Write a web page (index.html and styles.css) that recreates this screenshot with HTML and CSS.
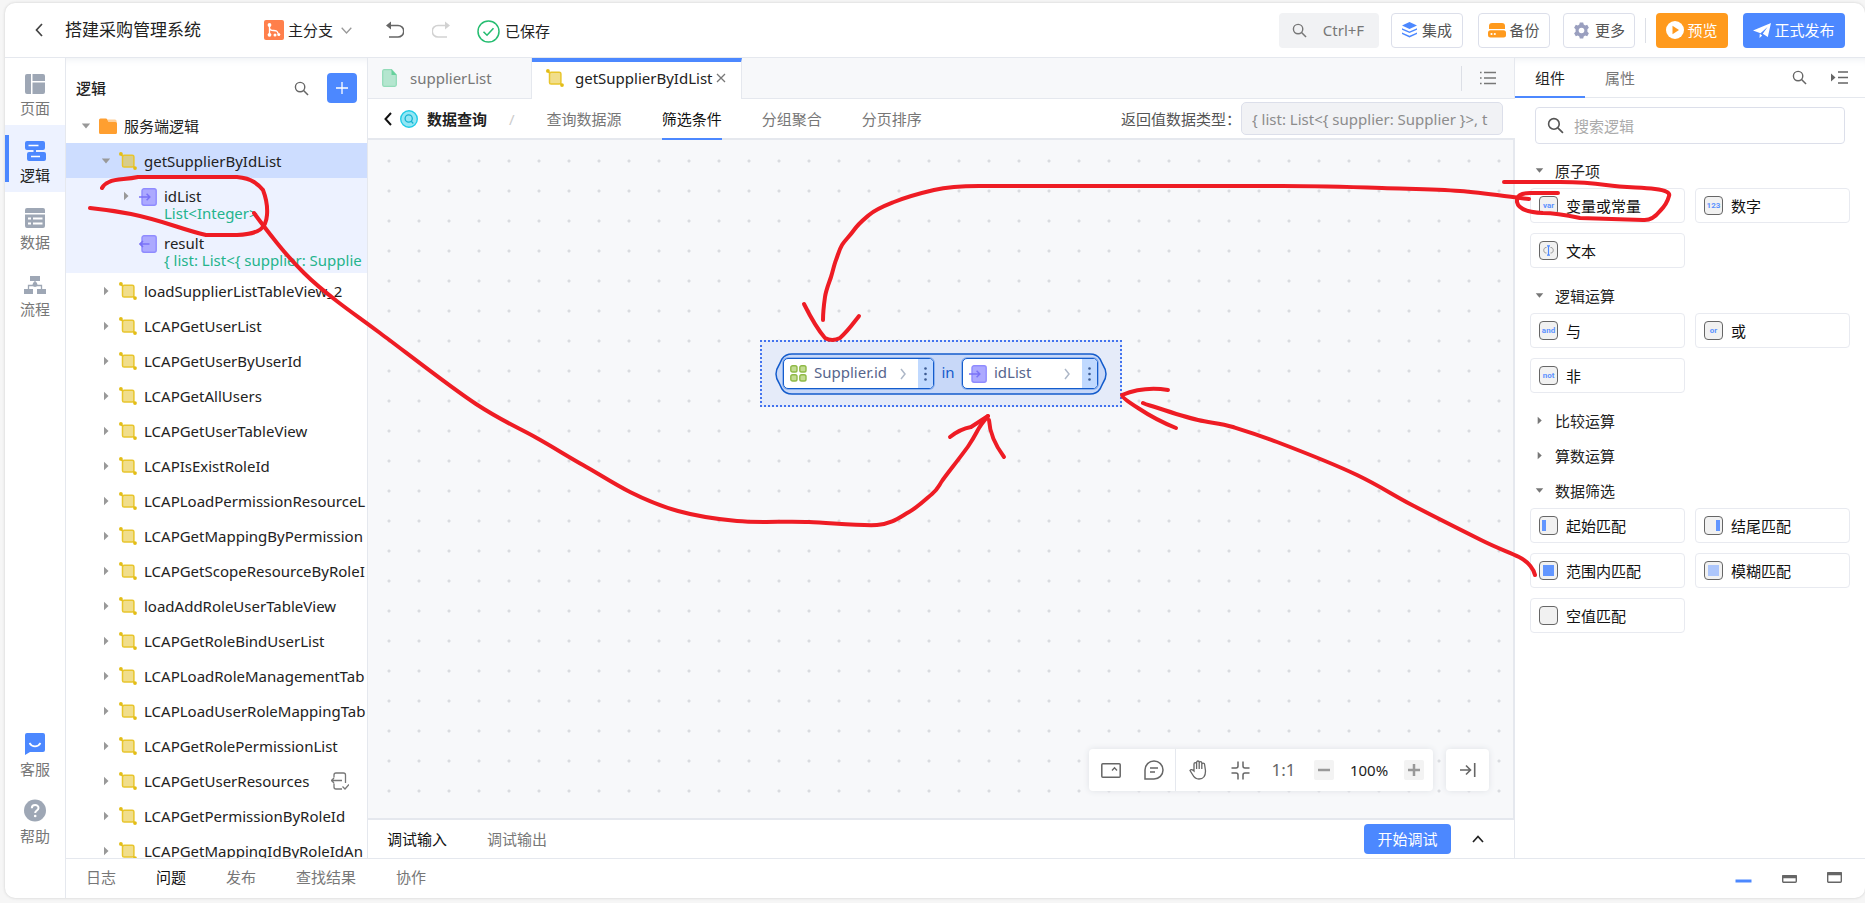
FILE: index.html
```html
<!DOCTYPE html>
<html lang="zh-CN">
<head>
<meta charset="utf-8">
<title>搭建采购管理系统</title>
<link rel="stylesheet" href="styles.css">
</head>
<body>
<svg class="defs" aria-hidden="true">
  <symbol id="i-search" viewBox="0 0 16 16"><circle cx="6.5" cy="6.5" r="5" fill="none" stroke="currentColor" stroke-width="1.5"/><path d="M10.2 10.2 15 15" fill="none" stroke="currentColor" stroke-width="1.6"/></symbol>
  <symbol id="i-right" viewBox="0 0 10 10"><path d="M3 .8 7.5 5 3 9.2z" fill="currentColor"/></symbol>
  <symbol id="i-down" viewBox="0 0 10 10"><path d="M.8 2.6h8.4L5 7.4z" fill="currentColor"/></symbol>
  <symbol id="i-logic" viewBox="0 0 18 18"><path d="M1.5 1.8 4 4.5M14 14l2 2" stroke="#e3bd17" stroke-width="1.6"/><rect x="3.5" y="3.2" width="11.4" height="11.8" rx="1.6" fill="#e3bd17" fill-opacity=".5" stroke="#e8c52c" stroke-width="1.5"/><circle cx="1.9" cy="1.9" r="1.9" fill="#e3bd17"/><circle cx="16" cy="16.1" r="1.9" fill="#e3bd17"/></symbol>
  <symbol id="i-in" viewBox="0 0 18 18"><rect x="3" y=".8" width="14.2" height="16.4" rx="2" fill="#aca9ff" stroke="#8f8bff" stroke-width="1.4"/><path d="M0 9h10M7.6 5.8 10.8 9l-3.2 3.2" fill="none" stroke="#7a72f7" stroke-width="1.5"/></symbol>
  <symbol id="i-out" viewBox="0 0 18 18"><rect x="3" y=".8" width="14.2" height="16.4" rx="2" fill="#aca9ff" stroke="#8f8bff" stroke-width="1.4"/><path d="M10.5 9H1M4 6 1 9l3 3" fill="none" stroke="#7a72f7" stroke-width="1.6"/></symbol>
</svg>
<div class="app">
  <header class="top">
    <button class="plain back" aria-label="返回"><svg width="8" height="14" viewBox="0 0 8 14"><path d="M7 1 1.5 7 7 13" fill="none" stroke="#444" stroke-width="1.7"/></svg></button>
    <h1 class="title">搭建采购管理系统</h1>
    <button class="plain branch"><svg width="20" height="20" viewBox="0 0 20 20"><rect width="20" height="20" rx="2" fill="#ff7f4b"/><g fill="none" stroke="#fff" stroke-width="1.3"><path d="M5.5 5v9M5.5 7.500c0 2.500 1.500 3 4 3 3.500 0 4 1 4.600 3"/></g><g fill="#fff"><circle cx="5.500" cy="5" r="1.900"/><circle cx="5.500" cy="14.800" r="1.900"/><circle cx="11" cy="15" r="1.500"/><circle cx="14.800" cy="14.500" r="1.500"/></g></svg>主分支<svg width="11" height="7" viewBox="0 0 11 7"><path d="M.7.8 5.500 6 10.300.8" fill="none" stroke="#999" stroke-width="1.300"/></svg></button>
    <button class="plain undo" aria-label="撤销"><svg width="18" height="18" viewBox="0 0 18 18"><path d="M2.500 4.500h9.500a5 5 0 0 1 0 11.500H3" fill="none" stroke="#666" stroke-width="1.600"/><path d="M0 4.500 5 .5v8z" fill="#666"/></svg></button>
    <button class="plain redo" aria-label="重做" disabled><svg width="18" height="18" viewBox="0 0 18 18"><path d="M15.500 4.500H6a5 5 0 0 0 0 11.500h9" fill="none" stroke="#d2d2d2" stroke-width="1.600"/><path d="M18 4.500 13 .5v8z" fill="#d2d2d2"/></svg></button>
    <span class="saved"><svg width="23" height="23" viewBox="0 0 23 23"><circle cx="11.500" cy="11.500" r="10.500" fill="none" stroke="#26bd71" stroke-width="1.500"/><path d="M6.500 11.800 10 15.200l6.500-7" fill="none" stroke="#26bd71" stroke-width="1.600"/></svg>已保存</span>
    <div class="actions">
      <button class="btn find"><svg width="15" height="15"><use href="#i-search"/></svg>Ctrl+F</button>
      <button class="btn line w1"><svg width="15" height="16" viewBox="0 0 15 16"><g fill="#4c88ff"><path d="M7.500 0 15 3.600 7.500 7 0 3.600z"/><path d="M0 6.300 7.500 9.500 15 6.300v1.500L7.500 11 0 7.800z"/><path d="M0 10.500l7.500 3.200 7.500-3.200V12l-7.500 3.600L0 12z"/></g></svg>集成</button>
      <button class="btn line w1 second"><svg width="18" height="15" viewBox="0 0 18 15"><path d="M4 0h10a3 3 0 0 1 3 3v3H1V3a3 3 0 0 1 3-3z" fill="#ff9a1d"/><rect y="7.300" width="18" height="7.200" rx="2.500" fill="#ff9a1d"/><circle cx="3.500" cy="11" r="1.100" fill="#fff"/><circle cx="6.800" cy="11" r="1.100" fill="#fff"/></svg>备份</button>
      <button class="btn line w1 third"><svg width="17" height="17" viewBox="0 0 17 17"><path d="M6.800.5h3.400l.5 2 1.500.9 2-.6 1.700 3-1.500 1.500v2.400l1.500 1.500-1.700 3-2-.6-1.500.9-.5 2H6.800l-.5-2-1.500-.9-2 .6-1.700-3 1.500-1.500V7.300L1.100 5.800l1.700-3 2 .6 1.500-.9z" fill="#9a9fbf"/><circle cx="8.500" cy="8.500" r="2.800" fill="#fff"/></svg>更多</button>
      <span class="vline"></span>
      <button class="btn orange"><svg width="18" height="18" viewBox="0 0 18 18"><circle cx="9" cy="9" r="9" fill="#fff"/><path d="M6.500 4.800 13 9l-6.500 4.200z" fill="#ff9a1d"/></svg>预览</button>
      <button class="btn blue"><svg width="18" height="15" viewBox="0 0 18 15"><path d="M0 7.500 18 0l-3.200 14-5-3.200L14.500 4l-7 6.200z" fill="#fff"/><path d="M6.800 10.800 9.200 12.500 6.500 15z" fill="#fff"/></svg>正式发布</button>
    </div>
  </header>

  <nav class="rail">
    <button class="rail-item"><svg width="20" height="20" viewBox="0 0 20 20" fill="#9ea7b5"><path d="M2 0h4v20H2a2 2 0 0 1-2-2V2a2 2 0 0 1 2-2zM7.500 0H18a2 2 0 0 1 2 2v5H7.500zM7.500 8.500H20V18a2 2 0 0 1-2 2H7.500z"/></svg>页面</button>
    <button class="rail-item on"><svg width="21" height="20" viewBox="0 0 21 20"><path d="M2 0h16a2 2 0 0 1 2 2v5a2 2 0 0 1-2 2h-7v2h8a2 2 0 0 1 2 2v5a2 2 0 0 1-2 2H4a2 2 0 0 1-2-2v-5a2 2 0 0 1 2-2h4.500V9H2a2 2 0 0 1-2-2V2a2 2 0 0 1 2-2z" fill="#4c88ff"/><path d="M3.500 4.500h10M6 15.500h9" stroke="#fff" stroke-width="1.600"/></svg>逻辑</button>
    <button class="rail-item"><svg width="20" height="20" viewBox="0 0 20 20"><path d="M2 0h16a2 2 0 0 1 2 2v3H0V2a2 2 0 0 1 2-2zM0 6.500h20V18a2 2 0 0 1-2 2H2a2 2 0 0 1-2-2z" fill="#9ea7b5"/><path d="M3 10.500h3M8 10.500h9.500M3 15.500h3M8 15.500h9.500" stroke="#fff" stroke-width="2"/></svg>数据</button>
    <button class="rail-item"><svg width="22" height="20" viewBox="0 0 22 20"><path d="M6 1h10v5H6zM0 14h9v5H0zM13 14h9v5h-9z" fill="#9ea7b5"/><circle cx="11" cy="9.500" r="2.400" fill="#9ea7b5"/><path d="M11 6v4M4.500 14v-3.500h13V14" fill="none" stroke="#9ea7b5" stroke-width="1.300"/></svg>流程</button>
    <span class="grow"></span>
    <button class="rail-item"><svg width="20" height="22" viewBox="0 0 20 22"><path d="M2 0h16a2 2 0 0 1 2 2v15a2 2 0 0 1-2 2H5l-5 3V2a2 2 0 0 1 2-2z" fill="#4c88ff"/><path d="M4.500 10c2.500 4.500 8.500 4.500 11 0" fill="none" stroke="#fff" stroke-width="1.600"/></svg>客服</button>
    <button class="rail-item"><svg width="22" height="23" viewBox="0 0 22 23"><circle cx="11" cy="11.500" r="11" fill="#9ea7b5"/><path d="M7.800 9.300c0-4.400 6.700-4.200 6.700-.4 0 2.600-3.300 2.500-3.300 5" fill="none" stroke="#fff" stroke-width="2"/><circle cx="11.200" cy="17" r="1.300" fill="#fff"/></svg>帮助</button>
  </nav>

  <aside class="tree">
    <div class="tree-head"><h2>逻辑</h2><button class="plain" aria-label="搜索"><svg width="15" height="15"><use href="#i-search"/></svg></button><button class="add" aria-label="新增"><svg width="14" height="14" viewBox="0 0 14 14"><path d="M7 1v12M1 7h12" stroke="#fff" stroke-width="1.300"/></svg></button></div>
    <ul>
      <li class="row root"><svg class="tw"><use href="#i-down"/></svg><svg class="ic" viewBox="0 0 18 18"><path d="M8 2.500h8a1.600 1.600 0 0 1 1.600 1.600v4H8z" fill="#ffd09a"/><path d="M1.500 1.500H7a1 1 0 0 1 1 .7L9.300 5h7.200A1.500 1.500 0 0 1 18 6.500v9a1.500 1.500 0 0 1-1.500 1.500h-15A1.500 1.500 0 0 1 0 15.500V3a1.500 1.500 0 0 1 1.500-1.500z" fill="#ff9f30"/></svg>服务端逻辑</li>
      <li class="row sel"><svg class="tw"><use href="#i-down"/></svg><svg class="ic"><use href="#i-logic"/></svg>getSupplierByIdList</li>
      <li class="row kid"><svg class="tw"><use href="#i-right"/></svg><svg class="ic"><use href="#i-in"/></svg><span>idList<em>List&lt;Integer&gt;</em></span></li>
      <li class="row kid last"><span class="tw"></span><svg class="ic"><use href="#i-out"/></svg><span>result<em>{ list: List&lt;{ supplier: Supplie</em></span></li>
      <li class="row"><svg class="tw"><use href="#i-right"/></svg><svg class="ic"><use href="#i-logic"/></svg>loadSupplierListTableView_2</li>
      <li class="row"><svg class="tw"><use href="#i-right"/></svg><svg class="ic"><use href="#i-logic"/></svg>LCAPGetUserList</li>
      <li class="row"><svg class="tw"><use href="#i-right"/></svg><svg class="ic"><use href="#i-logic"/></svg>LCAPGetUserByUserId</li>
      <li class="row"><svg class="tw"><use href="#i-right"/></svg><svg class="ic"><use href="#i-logic"/></svg>LCAPGetAllUsers</li>
      <li class="row"><svg class="tw"><use href="#i-right"/></svg><svg class="ic"><use href="#i-logic"/></svg>LCAPGetUserTableView</li>
      <li class="row"><svg class="tw"><use href="#i-right"/></svg><svg class="ic"><use href="#i-logic"/></svg>LCAPIsExistRoleId</li>
      <li class="row"><svg class="tw"><use href="#i-right"/></svg><svg class="ic"><use href="#i-logic"/></svg>LCAPLoadPermissionResourceL</li>
      <li class="row"><svg class="tw"><use href="#i-right"/></svg><svg class="ic"><use href="#i-logic"/></svg>LCAPGetMappingByPermission</li>
      <li class="row"><svg class="tw"><use href="#i-right"/></svg><svg class="ic"><use href="#i-logic"/></svg>LCAPGetScopeResourceByRoleI</li>
      <li class="row"><svg class="tw"><use href="#i-right"/></svg><svg class="ic"><use href="#i-logic"/></svg>loadAddRoleUserTableView</li>
      <li class="row"><svg class="tw"><use href="#i-right"/></svg><svg class="ic"><use href="#i-logic"/></svg>LCAPGetRoleBindUserList</li>
      <li class="row"><svg class="tw"><use href="#i-right"/></svg><svg class="ic"><use href="#i-logic"/></svg>LCAPLoadRoleManagementTab</li>
      <li class="row"><svg class="tw"><use href="#i-right"/></svg><svg class="ic"><use href="#i-logic"/></svg>LCAPLoadUserRoleMappingTab</li>
      <li class="row"><svg class="tw"><use href="#i-right"/></svg><svg class="ic"><use href="#i-logic"/></svg>LCAPGetRolePermissionList</li>
      <li class="row"><svg class="tw"><use href="#i-right"/></svg><svg class="ic"><use href="#i-logic"/></svg>LCAPGetUserResources<svg class="tail" width="18" height="18" viewBox="0 0 18 18"><path d="M3 5.500V3a2 2 0 0 1 2-2h7.500a2 2 0 0 1 2 2v8M3 11.500V15a2 2 0 0 0 2 2h6M0 8.500h11M3 6 .5 8.500 3 11M11.500 14.500 14 17l4-4.500" fill="none" stroke="#777" stroke-width="1.300"/></svg></li>
      <li class="row"><svg class="tw"><use href="#i-right"/></svg><svg class="ic"><use href="#i-logic"/></svg>LCAPGetPermissionByRoleId</li>
      <li class="row"><svg class="tw"><use href="#i-right"/></svg><svg class="ic"><use href="#i-logic"/></svg>LCAPGetMappingIdByRoleIdAn</li>
    </ul>
  </aside>

  <main class="editor">
    <div class="tabs">
      <button class="tab t1"><svg width="15" height="18" viewBox="0 0 15 18"><path d="M2 .7h7.500L14.300 6v9.800a1.500 1.500 0 0 1-1.500 1.500H2A1.500 1.500 0 0 1 .7 15.800V2.200A1.500 1.500 0 0 1 2 .7z" fill="#b4e6cf" stroke="#93dcb9" stroke-width="1.300"/><path d="M9.500.5 14.500 6h-5z" fill="#66d19c"/></svg>supplierList</button>
      <button class="tab t2"><svg class="ic"><use href="#i-logic"/></svg>getSupplierByIdList<svg width="10" height="10" viewBox="0 0 10 10"><path d="m1 1 8 8M9 1 1 9" stroke="#777" stroke-width="1.300"/></svg></button>
      <span class="grow"></span><span class="vline"></span>
      <button class="plain menu" aria-label="列表"><svg width="16" height="14" viewBox="0 0 16 14"><path d="M4 1.500h12M4 7h12M4 12.500h12" stroke="#777" stroke-width="1.500"/><path d="M0 1.500h1.600M0 7h1.600M0 12.500h1.600" stroke="#777" stroke-width="1.500"/></svg></button>
    </div>
    <div class="sub">
      <button class="plain" aria-label="返回"><svg width="8" height="14" viewBox="0 0 8 14"><path d="M7 1 1.500 7 7 13" fill="none" stroke="#111" stroke-width="2"/></svg></button>
      <svg class="q" width="18" height="18" viewBox="0 0 18 18"><circle cx="9" cy="9" r="8.300" fill="#93e6f4" stroke="#22cce6" stroke-width="1.400"/><circle cx="8.700" cy="8.500" r="3.600" fill="none" stroke="#16b4d2" stroke-width="1.300"/><path d="m11 11 2.300 2.500" stroke="#16b4d2" stroke-width="1.300"/></svg>
      <b>数据查询</b><span class="slash">/</span>
      <button class="step">查询数据源</button><button class="step on">筛选条件</button><button class="step">分组聚合</button><button class="step">分页排序</button>
      <span class="grow"></span>
      <label for="rt">返回值数据类型：</label><input id="rt" class="ret" value="{ list: List&lt;{ supplier: Supplier }&gt;, t" readonly>
    </div>
    <div class="canvas">
      <div class="node">
        <svg class="shape" width="332" height="42" viewBox="0 0 332 42"><path d="M17 1h298c5 0 8 2 10 5l3 6c2 3 3 5 3 9s-1 6-3 9l-3 6c-2 3-5 5-10 5H17c-5 0-8-2-10-5l-3-6c-2-3-3-5-3-9s1-6 3-9l3-6c2-3 5-5 10-5z" fill="#c8d8f8" stroke="#145ccc" stroke-width="1.500"/></svg>
        <div class="expr">
          <div class="slot s1"><svg width="17" height="17" viewBox="0 0 17 17"><g fill="#c3dc92" stroke="#8fb946" stroke-width="1.400"><rect x=".8" y=".8" width="6.200" height="6.200" rx="1.800"/><rect x="9.800" y=".8" width="6.200" height="6.200" rx="1.800"/><rect x=".8" y="9.800" width="6.200" height="6.200" rx="1.800"/><rect x="9.800" y="9.800" width="6.200" height="6.200" rx="1.800"/></g></svg><span>Supplier.id</span><svg class="chev" width="6" height="12" viewBox="0 0 6 12"><path d="m1 1 4 5-4 5" fill="none" stroke="#aeb8c8" stroke-width="1.500"/></svg><button aria-label="更多"><svg width="3" height="14" viewBox="0 0 3 14" fill="#3c5c94"><circle cx="1.500" cy="1.500" r="1.300"/><circle cx="1.500" cy="7" r="1.300"/><circle cx="1.500" cy="12.500" r="1.300"/></svg></button></div>
          <span class="op">in</span>
          <div class="slot s2"><svg width="18" height="18"><use href="#i-in"/></svg><span>idList</span><svg class="chev" width="6" height="12" viewBox="0 0 6 12"><path d="m1 1 4 5-4 5" fill="none" stroke="#aeb8c8" stroke-width="1.500"/></svg><button aria-label="更多"><svg width="3" height="14" viewBox="0 0 3 14" fill="#3c5c94"><circle cx="1.500" cy="1.500" r="1.300"/><circle cx="1.500" cy="7" r="1.300"/><circle cx="1.500" cy="12.500" r="1.300"/></svg></button></div>
        </div>
      </div>
      <div class="tools">
        <div class="bar">
          <button class="plain t" aria-label="窗口"><svg width="20" height="15" viewBox="0 0 20 15"><rect x=".8" y=".8" width="18.400" height="13.400" rx="1" fill="none" stroke="#666" stroke-width="1.500"/><path d="m11 7.500 2.500-2.800L16 7.500" fill="none" stroke="#666" stroke-width="1.300"/></svg></button>
          <button class="plain t" aria-label="注释"><svg width="20" height="20" viewBox="0 0 20 20"><path d="M1 19V10a9 9 0 1 1 9 9z" fill="none" stroke="#666" stroke-width="1.500"/><path d="M6 8h8M6 12h5" stroke="#666" stroke-width="1.500"/></svg></button>
          <span class="sep"></span>
          <button class="plain t" aria-label="拖动"><svg width="18" height="20" viewBox="0 0 18 20"><path d="M5 11V4a1.300 1.300 0 0 1 2.600 0V2.300a1.300 1.300 0 0 1 2.600 0V3a1.300 1.300 0 0 1 2.600 0v1.500a1.400 1.400 0 0 1 2.800 0L16.500 11c0 5-2 8-6.500 8-4 0-5.500-2.500-6.500-4.500L1 10.500c.8-1.500 2.500-1 4 .5zM7.600 3.500V9M10.200 3v6M12.800 4v5" fill="none" stroke="#666" stroke-width="1.300"/></svg></button>
          <button class="plain t" aria-label="适应"><svg width="19" height="19" viewBox="0 0 19 19"><path d="M7 .5V5a2 2 0 0 1-2 2H.5M12 .5V5a2 2 0 0 0 2 2h4.500M7 18.500V14a2 2 0 0 0-2-2H.5M12 18.500V14a2 2 0 0 1 2-2h4.500" fill="none" stroke="#666" stroke-width="1.500"/></svg></button>
          <button class="plain t one">1:1</button>
          <button class="sq" aria-label="缩小"><svg width="12" height="12" viewBox="0 0 12 12"><path d="M0 6h12" stroke="#999" stroke-width="2.500"/></svg></button>
          <span class="pct">100%</span>
          <button class="sq" aria-label="放大"><svg width="12" height="12" viewBox="0 0 12 12"><path d="M0 6h12M6 0v12" stroke="#999" stroke-width="2.500"/></svg></button>
        </div>
        <button class="bar end" aria-label="收起"><svg width="16" height="14" viewBox="0 0 16 14"><path d="M0 7h10M6 2.500 10.500 7 6 11.500M14.700 0v14" fill="none" stroke="#666" stroke-width="1.600"/></svg></button>
      </div>
    </div>
    <div class="debug"><button class="plain dk">调试输入</button><button class="plain gr">调试输出</button><span class="grow"></span><button class="start">开始调试</button><button class="plain up" aria-label="展开"><svg width="12" height="8" viewBox="0 0 12 8"><path d="m1 7 5-5.500L11 7" fill="none" stroke="#222" stroke-width="1.700"/></svg></button></div>
  </main>

  <aside class="panel">
    <div class="ptabs"><button class="pt on">组件</button><button class="pt">属性</button><span class="grow"></span><button class="plain" aria-label="搜索"><svg width="15" height="15"><use href="#i-search"/></svg></button><button class="plain" aria-label="折叠"><svg width="17" height="13" viewBox="0 0 17 13"><path d="M7 1h10M7 6.500h10M7 12h10" stroke="#666" stroke-width="1.500"/><path d="M0 2.500 4.500 6.500 0 10.500z" fill="#666"/></svg></button></div>
    <label class="search"><svg width="17" height="17"><use href="#i-search"/></svg><input placeholder="搜索逻辑" aria-label="搜索逻辑"></label>
    <div class="groups">
      <h3><svg><use href="#i-down"/></svg>原子项</h3>
      <div class="cards"><button class="card"><i>var</i>变量或常量</button><button class="card"><i>123</i>数字</button><button class="card"><i><svg width="11" height="11" viewBox="0 0 11 11"><path d="M3.500 2.500H3C0 2.500 0 8 3 8h.5M7.500 2.500H8c3 0 3 5.500 0 5.500h-.5" fill="none" stroke="#999"/><path d="M5.500 1v9M4 .8h3M4 10.200h3" stroke="#4c88ff" stroke-width="1.200"/></svg></i>文本</button></div>
      <h3><svg><use href="#i-down"/></svg>逻辑运算</h3>
      <div class="cards"><button class="card"><i>and</i>与</button><button class="card"><i>or</i>或</button><button class="card"><i>not</i>非</button></div>
      <h3><svg><use href="#i-right"/></svg>比较运算</h3>
      <h3><svg><use href="#i-right"/></svg>算数运算</h3>
      <h3><svg><use href="#i-down"/></svg>数据筛选</h3>
      <div class="cards"><button class="card"><i class="m-start"></i>起始匹配</button><button class="card"><i class="m-end"></i>结尾匹配</button><button class="card"><i class="m-in"></i>范围内匹配</button><button class="card"><i class="m-fuzzy"></i>模糊匹配</button><button class="card"><i></i>空值匹配</button></div>
    </div>
  </aside>

  <footer class="foot">
    <button class="plain">日志</button><button class="plain dk">问题</button><button class="plain">发布</button><button class="plain">查找结果</button><button class="plain">协作</button>
    <span class="grow"></span>
    <button class="plain win" aria-label="最小化"><svg width="17" height="12" viewBox="0 0 17 12"><path d="M.5 10h16" stroke="#4c88ff" stroke-width="3"/></svg></button>
    <button class="plain win" aria-label="半屏"><svg width="15" height="12" viewBox="0 0 15 12"><rect x=".7" y="4.700" width="13.600" height="6.600" rx="1" fill="none" stroke="#666" stroke-width="1.400"/><path d="M0 5.800h15" stroke="#666" stroke-width="3"/></svg></button>
    <button class="plain win" aria-label="全屏"><svg width="15" height="12" viewBox="0 0 15 12"><rect x=".7" y="1.700" width="13.600" height="9.600" rx="1" fill="none" stroke="#666" stroke-width="1.400"/><path d="M0 2.800h15" stroke="#666" stroke-width="3"/></svg></button>
  </footer>
</div>
<svg class="ink" viewBox="0 0 1865 903" aria-hidden="true">
  <path d="M102 188Q104 184 109 182C117 178 125 180 138 177H237Q248 178 254 182T263 190Q268 203 267 215C266 228 260 234 237 235H206C180 229 165 221 131 214Q110 210 90 208"/>
  <path d="M254 213C259 220 269 233 277 243S294 263 304 273S325 292 338 302S357 316 380 333S450 387 476 404S517 427 535 437S567 456 583 465S614 484 630 492S660 506 678 511S715 519 737 521S786 521 809 522S862 526 877 525S900 517 909 512S926 499 932 494S938 487 942 481S963 454 969 445S976 433 979 428S985 420 988 416"/>
  <path d="M950 437Q960 429 971 427L988 416M989 420Q990 438 1004 457"/>
  <path d="M1529 199C1510 197 1484 193 1460 191S1412 189 1382 188S1315 186 1282 186H979C960 186 947 187 934 190S904 198 894 202S876 209 869 215S859 223 854 230S845 240 842 245S838 255 836 260S833 271 831 277S826 290 825 297S823 313 823 320"/>
  <path d="M804 304C811 318 818 330 825 338Q832 342 840 338C848 331 852 325 859 316"/>
  <path d="M1535 575C1534 570 1529 562 1519 557S1499 549 1481 540S1433 516 1412 505S1380 486 1357 475S1298 450 1277 442S1246 431 1233 427S1211 423 1198 420S1167 411 1158 408S1147 405 1143 403"/>
  <path d="M1168 390Q1144 386 1122 395Q1122 398 1138 408Q1156 420 1176 428"/>
  <path d="M1504 182H1560Q1586 182 1606 185C1628 188 1640 187 1655 189Q1671 191 1669 196Q1667 204 1660 211Q1652 221 1643 220L1580 218Q1556 213 1543 213Q1519 212 1517 202Q1516 193 1530 193H1558"/>
</svg>
</body>
</html>
```
FILE: styles.css
```css
* { box-sizing: border-box; }
body {
  margin: 0;
  padding: 3px 0 5px 5px;
  background: #f6f6f6;
  color: #222;
  font: 15px/20px "Noto Sans", "Noto Sans CJK SC", sans-serif;
}
button, input { font: inherit; color: inherit; }
button { border: 0; padding: 0; background: none; white-space: nowrap; }
h1, h2, h3, ul { margin: 0; padding: 0; font-weight: 400; }
svg { flex: none; }
.defs { display: none; }
.plain { display: flex; align-items: center; }
.grow { flex: 1; }
.app {
  display: grid;
  grid-template: 55px minmax(0, 1fr) 40px / 61px 302px minmax(0, 1fr) 350px;
  height: calc(100vh - 8px);
  background: #fff;
  border-radius: 10px;
  overflow: hidden;
  box-shadow: 0 0 3px #ccc;
}

/* header */
.top { grid-column: 1 / -1; display: flex; align-items: center; padding: 0 20px 0 30px; border-bottom: 1px solid #e5e8ee; }
.title { font-size: 17px; line-height: 24px; margin-left: 22px; min-width: 140px; }
.branch { margin-left: 59px; gap: 4px; }
.branch svg:last-child { margin-left: 4px; }
.undo { margin-left: 34px; }
.redo { margin-left: 28px; }
.saved { display: flex; align-items: center; gap: 5px; margin-left: 27px; padding-top: 2px; }
.actions { display: flex; align-items: center; margin-left: auto; }
.btn { display: flex; align-items: center; justify-content: center; height: 35px; border-radius: 4px; gap: 5px; color: #555; }
.find { width: 100px; background: #f1f2f4; gap: 16px; padding-right: 2px; color: #777; }
.line { border: 1px solid #dcdfea; margin-left: 12px; }
.w1 { width: 72px; }
.second { margin-left: 15px; gap: 3px; }
.third { margin-left: 13px; }
.vline { width: 1px; height: 25px; background: #dcdfe6; }
.actions .vline { margin: 0 10px; }
.orange { width: 72px; background: #ff9a1d; color: #fff; gap: 3px; }
.blue { width: 102px; background: #4c88ff; color: #fff; gap: 3px; margin-left: 15px; }

/* left rail */
.rail { grid-row: 2 / 4; display: flex; flex-direction: column; border-right: 1px solid #e5e8ee; padding-bottom: 45px; }
.rail-item { display: flex; flex-direction: column; align-items: center; justify-content: flex-end; height: 67px; gap: 4px; padding-bottom: 7px; color: #777; border-left: 4px solid transparent; padding-right: 4px; }
.rail-item.on { background: linear-gradient(#4c88ff, #4c88ff) 0 50% / 4px 47px no-repeat border-box, #edf2ff border-box; color: #222; }

/* logic tree */
.tree { border-right: 1px solid #e5e8ee; overflow: hidden; box-shadow: inset 0 8px 10px -8px #e8ebf0; }
.tree-head { display: flex; align-items: center; padding: 15px 10px 5px; }
.tree-head h2 { font-size: 15px; line-height: 20px; font-weight: 500; margin-right: auto; }
.tree-head .plain { margin-right: 18px; color: #666; }
.add { display: grid; place-items: center; width: 30px; height: 30px; border-radius: 4px; background: #4c88ff; }
.tree ul { list-style: none; }
.row { display: flex; align-items: center; height: 35px; padding-left: 30px; white-space: nowrap; }
.root { padding-left: 10px; }
.tw { width: 10px; height: 10px; margin: 0 8px 0 5px; color: #999; }
.ic { width: 18px; height: 18px; margin-right: 7px; }
.sel { background: #cdddff; }
.kid { align-items: flex-start; height: 47px; padding: 10px 0 0 50px; background: #edf2ff; line-height: 17px; }
.kid.last { height: 48px; }
.kid .tw { margin-top: 3px; flex: none; }
.kid em { display: block; font-style: normal; color: #24b48c; }
.tail { margin-left: 22px; }

/* editor */
.editor { display: flex; flex-direction: column; min-width: 0; }
.tabs { display: flex; align-items: center; height: 41px; background: #f7f8fa; border-bottom: 1px solid #e5e8ee; border-right: 1px solid #e5e8ee; }
.tab { display: flex; align-items: center; height: 41px; padding-left: 14px; color: #777; }
.t1 { width: 164px; gap: 13px; border-right: 1px solid #e5e8ee; border-bottom: 1px solid #e5e8ee; }
.t2 { width: 210px; color: #222; background: #fff; border-top: 4px solid #4c88ff; border-right: 1px solid #e5e8ee; padding-bottom: 4px; }
.t2 .ic { margin-right: 11px; }
.t2 svg:last-child { margin-left: 3px; }
.menu { margin: 0 18px; }
.sub { display: flex; align-items: center; height: 41px; padding: 0 12px 0 16px; border-bottom: 2px solid #e5e8ee; }
.q { margin: 0 9px 0 8px; }
.sub b { font-weight: 700; }
.slash { margin: 0 30px 0 20px; padding: 0 2px; color: #ccc; }
.step { height: 41px; margin-right: 40px; color: #777; align-self: flex-start; border-bottom: 2px solid transparent; }
.step.on { color: #111; border-color: #4c88ff; }
.sub label { color: #555; }
.ret { width: 262px; height: 33px; border: 1px solid #dcdfea; border-radius: 5px; background: #f1f2f5; padding: 0 10px; color: #8c8c8c; }
.canvas {
  flex: 1;
  display: flex;
  flex-direction: column;
  align-items: center;
  justify-content: space-between;
  padding: 200px 24px 27px;
  border-right: 2px solid #e5e8ee;
  border-bottom: 2px solid #e5e8ee;
  background: radial-gradient(circle, #d9dbdf 1px, transparent 2px) 6px 6px / 30px 30px #f7f8fa;
}
.node { display: grid; place-items: center; width: 362px; height: 67px; border: 2px dotted #4272ee; background: #e5ebf9; }
.shape, .expr { grid-area: 1 / 1; }
.expr { display: flex; align-items: center; }
.slot { display: flex; align-items: center; height: 31px; border: 1px solid #145ccc; border-radius: 5px; background: #fff; color: #56658c; overflow: hidden; box-shadow: 0 0 0 1px #8db2ef; }
.slot > svg:first-child { margin: 0 7px 0 6px; }
.slot span { flex: 1; padding-bottom: 3px; }
.slot .chev { margin-left: 4px; }
.slot button { display: grid; place-items: center; width: 15px; height: 31px; margin-left: 12px; background: #c0d9ff; }
.s1 { width: 151px; }
.s2 { width: 136px; }
.op { width: 28px; padding-bottom: 3px; text-align: center; color: #145ccc; }
.tools { display: flex; align-self: flex-end; gap: 13px; }
.bar { display: flex; align-items: center; height: 42px; border-radius: 4px; background: #fff; box-shadow: 0 0 6px #dfe1e6; padding-right: 9px; }
.t { width: 43px; height: 42px; justify-content: center; color: #666; }
.one { margin-right: 9px; font-size: 17px; }
.sep { width: 1px; height: 42px; background: #e5e8ee; }
.sq { display: grid; place-items: center; width: 20px; height: 20px; background: #f3f3f3; border-radius: 2px; }
.pct { width: 70px; text-align: center; }
.end { width: 43px; justify-content: center; padding: 0; }
.debug { display: flex; align-items: center; height: 38px; padding: 0 30px 0 19px; border-right: 1px solid #e5e8ee; }
.dk { color: #111; }
.gr { color: #777; margin-left: 40px; }
.start { width: 87px; height: 30px; border-radius: 4px; background: #4c88ff; color: #fff; margin-right: 21px; }

/* right panel */
.ptabs { display: flex; align-items: center; height: 40px; padding-right: 17px; border-bottom: 1px solid #e5e8ee; gap: 24px; color: #666; box-shadow: inset 0 8px 10px -8px #e8ebf0; }
.pt { width: 70px; height: 40px; color: #777; margin-right: -24px; padding-top: 2px; border-bottom: 2px solid transparent; }
.pt.on { color: #222; border-color: #4c88ff; }
.search { display: flex; align-items: center; gap: 10px; height: 37px; margin: 9px 20px 9px; padding: 0 11px; border: 1px solid #dcdfea; border-radius: 4px; color: #555; }
.search input { flex: 1; min-width: 0; border: 0; outline: 0; padding: 0; background: none; }
.search input::placeholder { color: #aaa; }
.groups { padding: 0 15px; }
.groups h3 { display: flex; align-items: center; height: 35px; font-size: 15px; gap: 11px; padding-left: 5px; }
.groups h3 svg { width: 9px; height: 9px; color: #777; }
.cards { display: grid; grid-template-columns: 1fr 1fr; gap: 10px; margin-bottom: 10px; }
.card { display: flex; align-items: center; gap: 8px; height: 35px; padding-left: 8px; border: 1px solid #e8eaf0; border-radius: 4px; color: #111; }
.card i { display: grid; place-items: center; width: 19px; height: 19px; border: 1px solid #666; border-radius: 4px; background: #f1f1f1; color: #5c92ff; font: 700 8px/10px Roboto, sans-serif; }
.m-start::before, .m-end::before, .m-in::before, .m-fuzzy::before { content: ""; width: 11px; height: 11px; background: #6296ff; }
.card .m-start::before { width: 4px; justify-self: start; margin-left: 2px; }
.card .m-end::before { width: 4px; justify-self: end; margin-right: 2px; }
.card .m-fuzzy::before { background: #adc6fb; }

/* footer */
.foot { grid-column: 2 / -1; display: flex; align-items: center; gap: 40px; padding: 0 23px 3px 20px; border-top: 1px solid #e5e8ee; color: #777; }
.win { margin-left: -10px; }

/* pen marks over the whole page */
.ink { position: absolute; top: 0; left: 0; width: 100%; pointer-events: none; fill: none; stroke: #ee1c24; stroke-width: 4; stroke-linecap: round; stroke-linejoin: round; }
```
